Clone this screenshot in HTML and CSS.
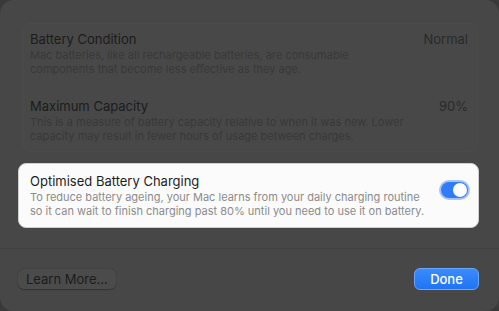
FILE: index.html
```html
<!DOCTYPE html>
<html>
<head>
<meta charset="utf-8">
<link rel="stylesheet" href="styles.css">
</head>
<body>
<div class="window">
  <div class="group">
    <div class="row">
      <div class="row-head">
        <span class="title">Battery Condition</span>
        <span class="value">Normal</span>
      </div>
      <p class="desc">Mac batteries, like all rechargeable batteries, are consumable<br>components that become less effective as they age.</p>
    </div>
    <div class="row row-second">
      <div class="row-head">
        <span class="title">Maximum Capacity</span>
        <span class="value">90%</span>
      </div>
      <p class="desc">This is a measure of battery capacity relative to when it was new. Lower<br>capacity may result in fewer hours of usage between charges.</p>
    </div>
  </div>
  <div class="card">
    <div class="card-text">
      <div class="card-title">Optimised Battery Charging</div>
      <p class="card-desc">To reduce battery ageing, your Mac learns from your daily charging routine<br>so it can wait to finish charging past 80% until you need to use it on battery.</p>
    </div>
    <div class="toggle"><div class="knob"></div></div>
  </div>
  <div class="footer">
    <button class="btn btn-secondary">Learn More...</button>
    <button class="btn btn-primary">Done</button>
  </div>
</div>
</body>
</html>
```
FILE: styles.css
```css
* { box-sizing: border-box; }
html, body { margin: 0; padding: 0; }
body {
  width: 499px;
  height: 311px;
  background: #393939;
  font-family: Inter, "Liberation Sans", sans-serif;
  overflow: hidden;
}
.window {
  width: 499px;
  height: 311px;
  background: #474747;
  border-radius: 14px;
  display: flex;
  flex-direction: column;
}
.group {
  margin: 23px 21px 0 22px;
  height: 129px;
  border: 1px solid #4b4b4b;
  border-radius: 7px;
  background: #484848;
  padding: 7px 9px 0 7px;
}
.row-head {
  display: flex;
  justify-content: space-between;
  height: 16px;
  line-height: 16px;
}
.title {
  font-size: 13px;
  color: #1c1c1c;
}
.value {
  font-size: 13px;
  color: #2a2a2a;
}
.desc {
  margin: 1px 0 0;
  font-size: 11px;
  line-height: 14px;
  color: #383838;
}
.row-second { margin-top: 22px; }
.card {
  margin: 11px 20px 0 18px;
  height: 65px;
  background: #fbfbfb;
  border: 1px solid #cfcfcf;
  border-radius: 8px;
  display: flex;
  justify-content: space-between;
  padding: 9px 10px 0 11px;
}
.card-title {
  font-size: 13px;
  line-height: 16px;
  color: #1d1d1f;
}
.card-desc {
  margin: 1px 0 0;
  font-size: 11px;
  line-height: 14px;
  color: #8b8b8b;
}
.toggle {
  margin-top: 9px;
  width: 27px;
  height: 16px;
  border-radius: 8px;
  background: #2f7cf6;
  box-shadow: 0 0 0 2px rgba(60, 130, 246, 0.45);
  position: relative;
  flex: none;
}
.knob {
  position: absolute;
  right: 1px;
  top: 1px;
  width: 14px;
  height: 14px;
  border-radius: 50%;
  background: #ffffff;
}
.footer {
  margin-top: 20px;
  border-top: 1px solid #404040;
  flex: 1;
  display: flex;
  justify-content: space-between;
  align-items: flex-start;
  padding: 19px 20px 0 18px;
}
.btn {
  font-family: Inter, "Liberation Sans", sans-serif;
  font-size: 13px;
  border-radius: 6px;
  margin: 0;
}
.btn-secondary {
  margin-top: 1px;
  height: 20px;
  padding: 0 8px;
  background: #4b4b4b;
  border: none;
  box-shadow: 0 0.5px 1px rgba(0,0,0,0.25), 0 0 0 0.5px rgba(0,0,0,0.08);
  color: #1c1c1c;
}
.btn-primary {
  height: 22px;
  width: 65px;
  background: linear-gradient(#3a8bfb, #1f74f3);
  border: 1px solid #6aa6fb;
  color: #ffffff;
  font-weight: 500;
}
```
